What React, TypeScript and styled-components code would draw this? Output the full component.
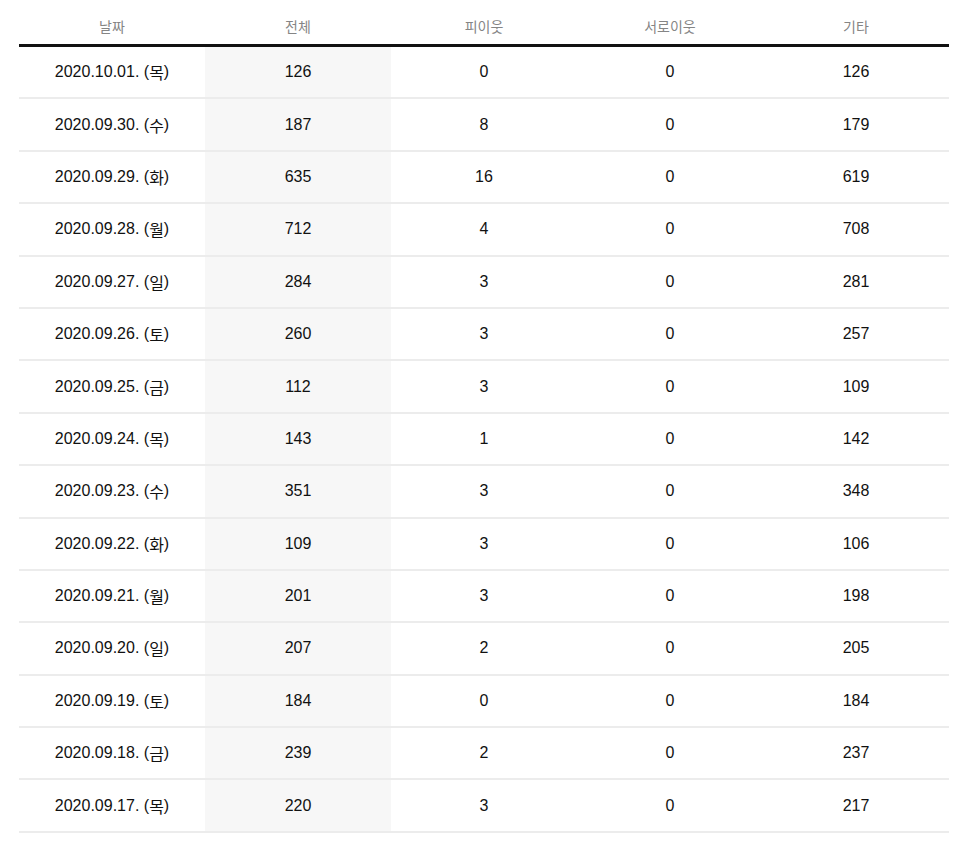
import React from "react";
import styled, { createGlobalStyle } from "styled-components";

const GlobalStyle = createGlobalStyle`
  html, body {
    margin: 0;
    padding: 0;
    background: #ffffff;
  }
  body {
    font-family: "Liberation Sans", "Noto Sans CJK KR", Arial, sans-serif;
  }
`;

const Wrapper = styled.div`
  width: 930px;
  margin-left: 19px;
`;

const HeaderRow = styled.div`
  display: grid;
  grid-template-columns: repeat(5, 186px);
  height: 47px;
  box-sizing: border-box;
  border-bottom: 3px solid #111111;
`;

const HeaderCell = styled.div`
  display: flex;
  align-items: center;
  justify-content: center;
  padding-top: 7px;
  box-sizing: border-box;
  font-size: 14px;
  color: #858585;
  font-family: "Noto Sans CJK KR", "Liberation Sans", sans-serif;
  font-weight: 400;
`;

const Row = styled.div`
  display: grid;
  grid-template-columns: repeat(5, 186px);
  height: 52.4px;
  box-sizing: border-box;
  border-bottom: 2px solid #ececec;
`;

const Cell = styled.div<{ $shaded?: boolean }>`
  display: flex;
  align-items: center;
  justify-content: center;
  font-size: 16px;
  color: #111111;
  background: ${(p) => (p.$shaded ? "#f7f7f7" : "transparent")};
`;

const Weekday = styled.span`
  font-family: "Noto Sans CJK KR", sans-serif;
  font-size: 16px;
  line-height: 1;
`;

type Entry = [string, string, number, number, number, number];

const data: Entry[] = [
  ["2020.10.01.", "목", 126, 0, 0, 126],
  ["2020.09.30.", "수", 187, 8, 0, 179],
  ["2020.09.29.", "화", 635, 16, 0, 619],
  ["2020.09.28.", "월", 712, 4, 0, 708],
  ["2020.09.27.", "일", 284, 3, 0, 281],
  ["2020.09.26.", "토", 260, 3, 0, 257],
  ["2020.09.25.", "금", 112, 3, 0, 109],
  ["2020.09.24.", "목", 143, 1, 0, 142],
  ["2020.09.23.", "수", 351, 3, 0, 348],
  ["2020.09.22.", "화", 109, 3, 0, 106],
  ["2020.09.21.", "월", 201, 3, 0, 198],
  ["2020.09.20.", "일", 207, 2, 0, 205],
  ["2020.09.19.", "토", 184, 0, 0, 184],
  ["2020.09.18.", "금", 239, 2, 0, 237],
  ["2020.09.17.", "목", 220, 3, 0, 217],
];

const headers = ["날짜", "전체", "피이웃", "서로이웃", "기타"];

export default function App() {
  return (
    <>
      <GlobalStyle />
      <Wrapper>
        <HeaderRow>
          {headers.map((h) => (
            <HeaderCell key={h}>{h}</HeaderCell>
          ))}
        </HeaderRow>
        {data.map(([date, day, total, a, b, c]) => (
          <Row key={date}>
            <Cell>
              {date}&nbsp;(<Weekday>{day}</Weekday>)
            </Cell>
            <Cell $shaded>{total}</Cell>
            <Cell>{a}</Cell>
            <Cell>{b}</Cell>
            <Cell>{c}</Cell>
          </Row>
        ))}
      </Wrapper>
    </>
  );
}
